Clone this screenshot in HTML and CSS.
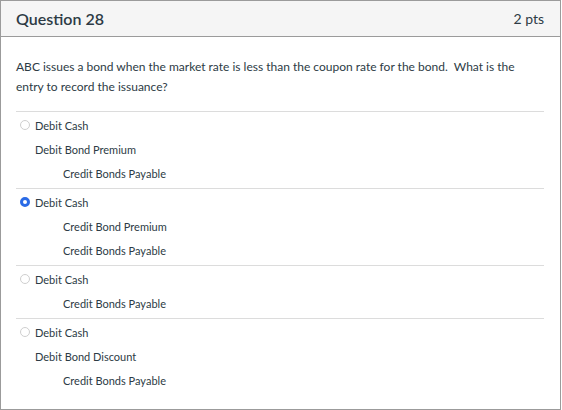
FILE: index.html
```html
<!DOCTYPE html>
<html>
<head>
<meta charset="utf-8">
<link rel="stylesheet" href="styles.css">
</head>
<body>
<div class="question">
  <div class="header">
    <span class="title">Question 28</span>
    <span class="pts">2 pts</span>
  </div>
  <div class="body">
    <p class="text">ABC issues a bond when the market rate is less than the coupon rate for the bond.&nbsp; What is the entry to record the issuance?</p>
    <div class="answers">
      <div class="answer">
        <div class="line"><span class="radio"></span><span>Debit Cash</span></div>
        <div class="line">Debit Bond Premium</div>
        <div class="line indent">Credit Bonds Payable</div>
      </div>
      <div class="answer">
        <div class="line"><span class="radio checked"></span><span>Debit Cash</span></div>
        <div class="line indent">Credit Bond Premium</div>
        <div class="line indent">Credit Bonds Payable</div>
      </div>
      <div class="answer">
        <div class="line"><span class="radio"></span><span>Debit Cash</span></div>
        <div class="line indent">Credit Bonds Payable</div>
      </div>
      <div class="answer">
        <div class="line"><span class="radio"></span><span>Debit Cash</span></div>
        <div class="line">Debit Bond Discount</div>
        <div class="line indent">Credit Bonds Payable</div>
      </div>
    </div>
  </div>
</div>
</body>
</html>
```
FILE: styles.css
```css
* { box-sizing: border-box; }
body {
  margin: 0;
  font-family: Lato, "Liberation Sans", sans-serif;
  color: #2d3b45;
  background: #fff;
}
.question {
  width: 561px;
  height: 410px;
  border: 1px solid #9b9b9b;
}
.header {
  height: 36px;
  background: #f5f5f5;
  border-bottom: 1px solid #9b9b9b;
  display: flex;
  align-items: center;
  justify-content: space-between;
  padding: 0 16px 0 15px;
}
.title {
  font-size: 16px;
  font-weight: 600;
}
.pts {
  font-size: 14px;
}
.body {
  padding: 20px 16px 0 15px;
}
.text {
  margin: 0;
  font-size: 12px;
  line-height: 20px;
  padding-right: 20px;
}
.answers {
  margin-top: 14px;
}
.answer {
  border-top: 1px solid #dcdcdc;
  padding: 1px 0 3px 0;
}
.line {
  height: 24px;
  display: flex;
  align-items: center;
  font-size: 11px;
  padding-left: 19px;
}
.line .radio {
  margin-left: -15px;
  margin-right: 5px;
}
.indent {
  padding-left: 47px;
}
.radio {
  width: 10px;
  height: 10px;
  border-radius: 50%;
  border: 1px solid #cfcfcf;
  background: #fff;
  flex: none;
}
.radio.checked {
  border: 3px solid #2b6be6;
  background: #fff;
}
```
